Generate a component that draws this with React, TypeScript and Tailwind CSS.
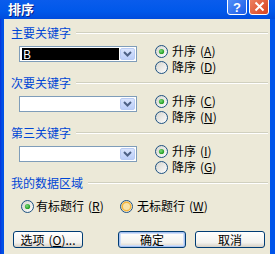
import React, { useId } from "react";

function Radio({ checked = false, hot = false }: { checked?: boolean; hot?: boolean }) {
  const id = useId().replace(/:/g, "");
  return (
    <svg width="13" height="13" viewBox="0 0 13 13" className="shrink-0">
      <defs>
        <linearGradient id={`g${id}`} x1="0" y1="0" x2="1" y2="1">
          <stop offset="0" stopColor="#D4D3CC" />
          <stop offset="1" stopColor="#FFFFFF" />
        </linearGradient>
        <radialGradient id={`d${id}`} cx="0.4" cy="0.4" r="0.6">
          <stop offset="0" stopColor="#7DDB7D" />
          <stop offset="1" stopColor="#1E9A1E" />
        </radialGradient>
      </defs>
      <circle cx="6.5" cy="6.5" r="6" fill={`url(#g${id})`} stroke="#1C5180" strokeWidth="1" />
      {hot && <circle cx="6.5" cy="6.5" r="4.3" fill="#F9E2A8" stroke="#F5B63E" strokeWidth="1.6" />}
      {checked && <circle cx="6.5" cy="6.5" r="2.6" fill={`url(#d${id})`} />}
    </svg>
  );
}

function Acc({ k }: { k: string }) {
  return (
    <span className="ml-[4px]">
      (<span className="underline underline-offset-[1px]">{k}</span>)
    </span>
  );
}

function Combo({ value }: { value?: string }) {
  return (
    <div className="w-[118px] h-[16px] border border-[#7F9DB9] bg-white flex items-stretch p-[1px]">
      <div className="flex-1 flex items-center">
        {value && (
          <div className="h-full w-[97px] ml-[1px] bg-black text-white flex items-center pl-[1px] text-[12px] leading-[12px]">
            {value}
          </div>
        )}
      </div>
      <div className="w-[15px] rounded-[2px] border border-[#B9CBF3] bg-[linear-gradient(#D9E4FD,#BBCEF9)] flex items-center justify-center">
        <svg width="9" height="6" viewBox="0 0 9 6">
          <path d="M1 1 L4.5 4.5 L8 1" fill="none" stroke="#4D6185" strokeWidth="2" />
        </svg>
      </div>
    </div>
  );
}

function GroupLabel({ text }: { text: string }) {
  return (
    <div className="flex items-center h-[12px]">
      <span className="text-[#0046D5] whitespace-nowrap">{text}</span>
      <div className="flex-1 ml-[5px] h-[2px] border-t border-[#D0D0BF] border-b border-b-white" />
    </div>
  );
}

function KeySection({
  label,
  value,
  asc,
  desc,
}: {
  label: string;
  value?: string;
  asc: string;
  desc: string;
}) {
  return (
    <div className="h-[50px] flex flex-col">
      <GroupLabel text={label} />
      <div className="mt-[7px] flex pl-[8px]">
        <Combo value={value} />
        <div className="ml-[18px] mt-[-3px] flex flex-col">
          <div className="h-[16px] flex items-center gap-[4px]">
            <Radio checked />
            <span className="whitespace-nowrap">
              升序<Acc k={asc} />
            </span>
          </div>
          <div className="h-[16px] flex items-center gap-[4px]">
            <Radio />
            <span className="whitespace-nowrap">
              降序<Acc k={desc} />
            </span>
          </div>
        </div>
      </div>
    </div>
  );
}

function Button({ children, def = false, w }: { children: React.ReactNode; def?: boolean; w: string }) {
  return (
    <div
      className={`${w} h-[17px] rounded-[3px] border border-[#003C74] bg-[linear-gradient(#FFFFFF,#F3F2EE_70%,#D6D0C5)] flex items-center justify-center ${
        def ? "shadow-[inset_0_0_0_1px_#A6C1F0,inset_0_0_0_2px_#CEDDF8]" : ""
      }`}
    >
      <span className="whitespace-nowrap">{children}</span>
    </div>
  );
}

export default function App() {
  return (
    <div className="w-[275px] h-[254px] overflow-hidden flex flex-col bg-[linear-gradient(90deg,#0831D9,#0050E6_2px,#0055EA)] font-[family-name:'Noto_Sans_CJK_SC',sans-serif] text-[12px] leading-[12px] text-black">
      <div className="h-[19px] shrink-0 flex items-start bg-[linear-gradient(#0A5CEC,#0058EA_60%,#004CDC)] pl-[8px] pr-[6px]">
        <span className="text-white font-bold text-[13px] leading-[17px] [text-shadow:1px_1px_#0A1E80]">
          排序
        </span>
        <div className="ml-auto flex gap-[2px] mt-[-6px]">
          <div className="w-[20px] h-[21px] rounded-[3px] border border-white bg-[linear-gradient(135deg,#5C97FA,#1A5CE8)] flex items-center justify-center">
            <span className="text-white font-bold text-[13px] leading-[13px] mt-[5px] font-[family-name:'Liberation_Sans',sans-serif]">
              ?
            </span>
          </div>
          <div className="w-[20px] h-[21px] rounded-[3px] border border-white bg-[linear-gradient(135deg,#F08A6A,#D8421E)] flex items-center justify-center">
            <svg width="11" height="11" viewBox="0 0 11 11" className="mt-[4px]">
              <path d="M1.5 1.5 L9.5 9.5 M9.5 1.5 L1.5 9.5" stroke="white" strokeWidth="2" />
            </svg>
          </div>
        </div>
      </div>
      <div className="flex-1 ml-[4px] mr-[5px] bg-[#ECE9D8] flex flex-col pt-[8px] pl-[7px] pr-[2px]">
        <KeySection label="主要关键字" value="B" asc="A" desc="D" />
        <KeySection label="次要关键字" asc="C" desc="N" />
        <KeySection label="第三关键字" asc="I" desc="G" />
        <GroupLabel text="我的数据区域" />
        <div className="mt-[10px] h-[14px] flex items-center ml-[10px]">
          <div className="w-[99px] flex items-center gap-[2px]">
            <Radio checked />
            <span className="whitespace-nowrap">
              有标题行<Acc k="R" />
            </span>
          </div>
          <div className="flex items-center gap-[4px]">
            <Radio hot />
            <span className="whitespace-nowrap">
              无标题行<Acc k="W" />
            </span>
          </div>
        </div>
        <div className="mt-[18px] flex ml-[2px]">
          <Button w="w-[70px]">
            选项<Acc k="O" />...
          </Button>
          <div className="ml-[35px]">
            <Button w="w-[68px]" def>
              确定
            </Button>
          </div>
          <div className="ml-[9px]">
            <Button w="w-[70px]">取消</Button>
          </div>
        </div>
      </div>
    </div>
  );
}
